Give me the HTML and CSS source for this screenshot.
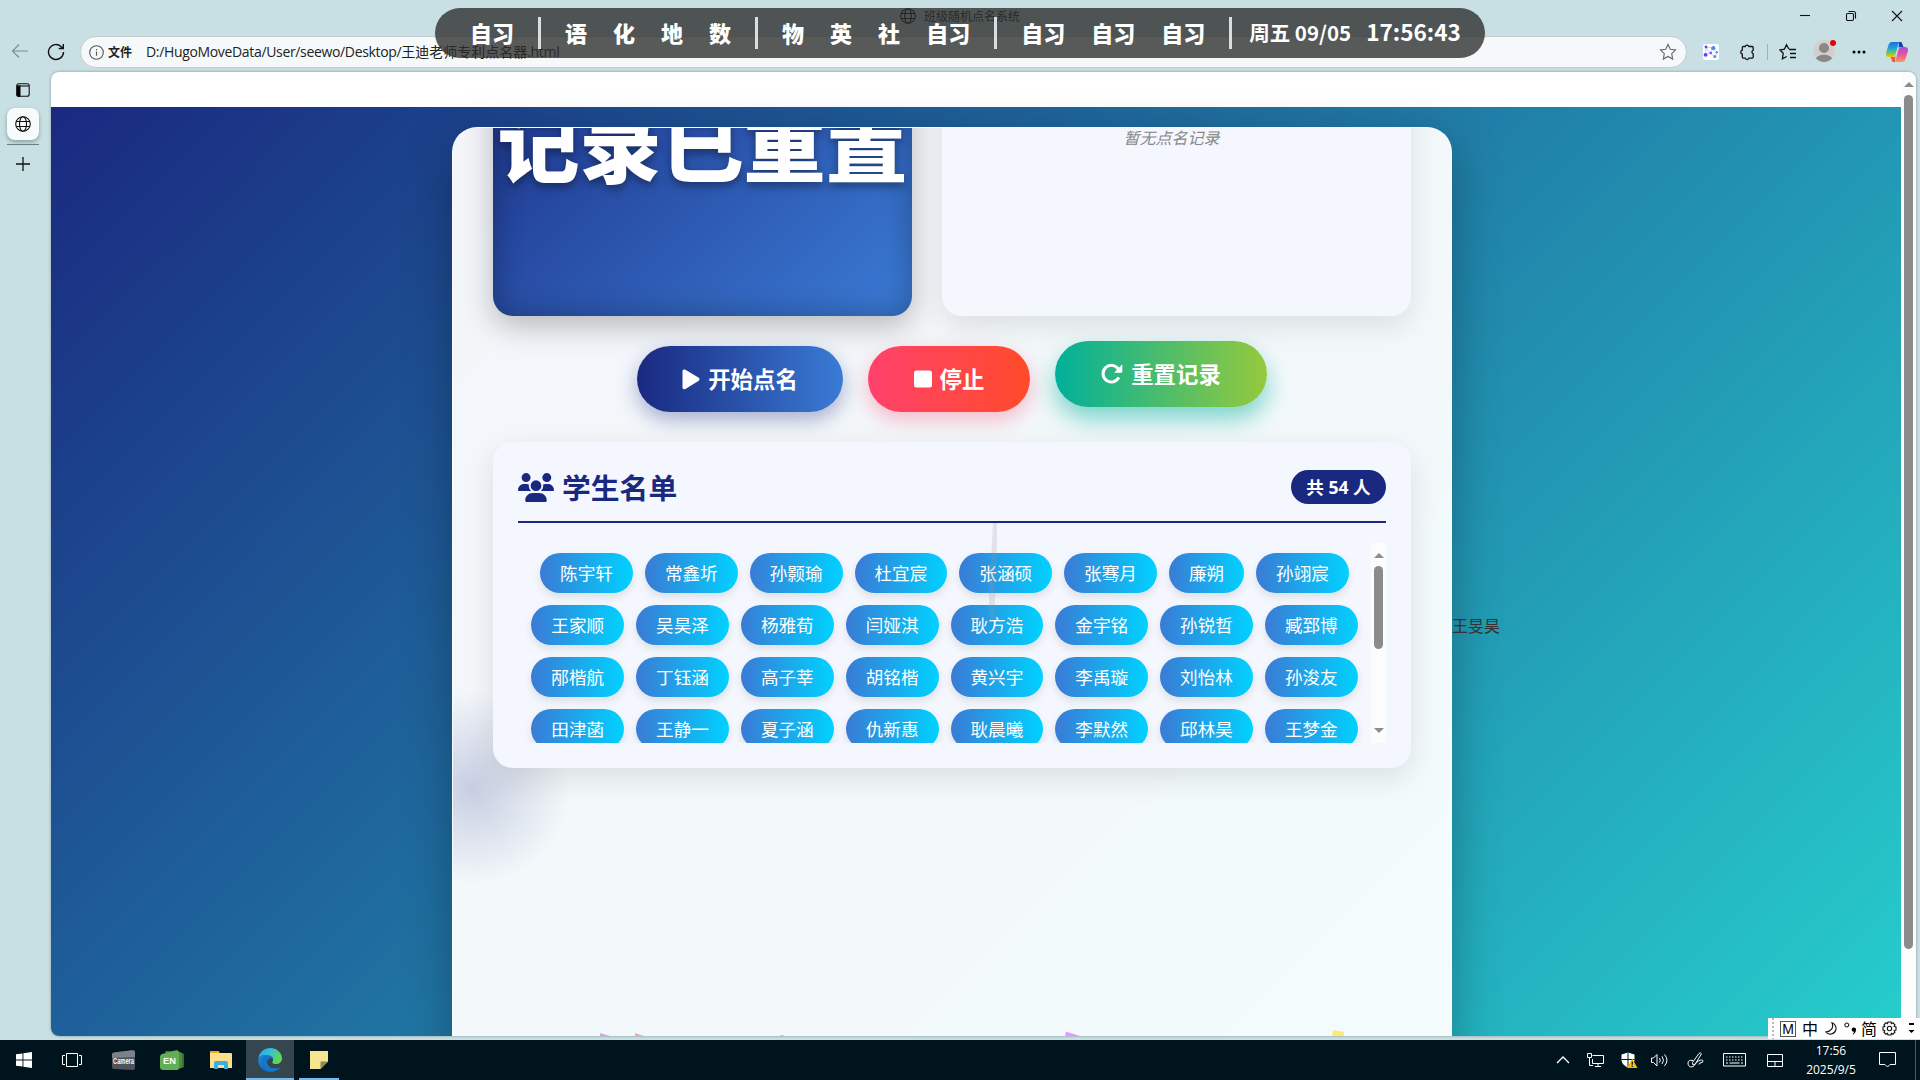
FILE: index.html
```html
<!DOCTYPE html>
<html lang="zh-CN">
<head>
<meta charset="utf-8">
<title>班级随机点名系统</title>
<link rel="stylesheet" href="styles.css">
</head>
<body>
<div class="desktop">
  <div class="browser">
    <header class="titlebar">
      <div class="tab-title">
        <svg width="16" height="16" viewBox="0 0 16 16" class="line"><circle cx="8" cy="8" r="7.3"/><ellipse cx="8" cy="8" rx="3.3" ry="7.3"/><path d="M1.3 5.5h13.4M1.3 10.5h13.4"/></svg>
        <span>班级随机点名系统</span>
      </div>
      <div class="window-controls">
        <svg width="12" height="12" viewBox="0 0 12 12" class="line"><path d="M1 5.5h10"/></svg>
        <svg width="12" height="12" viewBox="0 0 12 12" class="line"><rect x="1.5" y="3.5" width="7" height="7" rx="1.2"/><path d="M3.5 1.5h5a2 2 0 0 1 2 2v5"/></svg>
        <svg width="12" height="12" viewBox="0 0 12 12" class="line"><path d="M1 1l10 10M11 1L1 11"/></svg>
      </div>
    </header>
    <div class="toolbar">
      <svg class="line back" width="18" height="16" viewBox="0 0 18 16"><path d="M17 8H1.5M8 1.5L1.5 8L8 14.5"/></svg>
      <svg class="line reload" width="18" height="18" viewBox="0 0 18 18"><path d="M16.5 9A7.5 7.5 0 1 1 14 3.4L16 5.2M16.3 1v4.5h-4.6" stroke-width="1.4"/></svg>
      <div class="address">
        <svg class="line info" width="15" height="15" viewBox="0 0 15 15"><circle cx="7.5" cy="7.5" r="6.8"/><path d="M7.5 6.5v4.3M7.5 4v1.2"/></svg>
        <span class="scheme">文件</span>
        <span class="url"><span class="url-path">D:/HugoMoveData/User/seewo/Desktop/</span>王迪老师专利点名器<span class="url-path">.html</span></span>
        <svg class="line star" width="18" height="18" viewBox="0 0 18 18"><path d="M9 1.4l2.3 4.9 5.3.7-3.9 3.7 1 5.4L9 13.5l-4.7 2.6 1-5.4L1.4 7l5.3-.7z"/></svg>
      </div>
      <div class="tools">
        <svg width="16" height="16" viewBox="0 0 16 16"><rect width="16" height="16" rx="2" fill="#fff"/><path d="M3 3l7 1 4 4-2 5-5-4-4 2zM10 4L7 9M3 3l4 6" stroke="#b9c3ff" fill="none" stroke-width=".8"/><circle cx="3" cy="3" r="1.4" fill="#6a3df5"/><circle cx="10.3" cy="4.2" r="2.1" fill="#4b8bff"/><circle cx="2.6" cy="10.8" r="1.9" fill="#6a3df5"/><circle cx="7.8" cy="9" r="1.3" fill="#5265f7"/><circle cx="13.8" cy="8.3" r="1.2" fill="#3d9bff"/><circle cx="11.8" cy="12.6" r="1.5" fill="#4b8bff"/></svg>
        <svg class="line puzzle" width="16" height="18" viewBox="0 0 16 18"><path d="M4 3.5h2.2a2 2 0 0 1 3.8 0h3.2a1 1 0 0 1 1 1v2.8a1.9 1.9 0 0 0 0 3.6v3.2a1 1 0 0 1-1 1H10a2 2 0 0 1-3.8 0H4.300a1 1 0 0 1-1-1v-3a2 2 0 0 1 0-3.900V4.500a1 1 0 0 1 .7-1z" stroke-width="1.3"/></svg>
        <i class="divider"></i>
        <svg class="line favs" width="18" height="18" viewBox="0 0 18 18"><path d="M9.800 6L7.500 1.700 5.400 6.200 1 7l3.200 3.300-.8 5.500 4.300-2.300M10 6.500h7M11 10.500h6M11 14.500h6" stroke-width="1.3"/></svg>
        <svg class="avatar" width="26" height="26" viewBox="0 0 26 26"><circle cx="12" cy="14" r="11" fill="#d2d0ce"/><circle cx="12" cy="11" r="5" fill="#8a8886"/><path d="M4 21.500c2-5 14-5 16 0a11 11 0 0 1-16 0z" fill="#8a8886"/><circle cx="21" cy="6" r="3.600" fill="#c8e0e3"/><circle cx="21" cy="6" r="3" fill="#e60000"/></svg>
        <svg class="more" width="14" height="4" viewBox="0 0 14 4"><circle cx="2" cy="2" r="1.500"/><circle cx="7" cy="2" r="1.500"/><circle cx="12" cy="2" r="1.500"/></svg>
        <svg class="copilot" width="22" height="20" viewBox="0 0 22 20">
          <defs>
            <linearGradient id="cpa" x1="0" y1="0" x2="0" y2="1"><stop offset="0" stop-color="#1a6fe0"/><stop offset=".45" stop-color="#20a8d8"/><stop offset=".75" stop-color="#7fc843"/><stop offset="1" stop-color="#f3c21b"/></linearGradient>
            <linearGradient id="cpb" x1="0" y1="0" x2="0" y2="1"><stop offset="0" stop-color="#a44de8"/><stop offset=".5" stop-color="#e9549b"/><stop offset="1" stop-color="#ff9a55"/></linearGradient>
          </defs>
          <path d="M13 0h2.500l2 5h-3c-1 0-1.500.5-2 1.500z" fill="#1540b8"/><path d="M9 20H6.500l-2-5h3c1 0 1.500-.5 2-1.500z" fill="#ef5b2d"/>
          <path d="M6 0h8c-1.200.5-1.700 1.500-2 3l-2 8c-.7 2.800-1.800 4-4 4H3c-2.500 0-3.500-2-2.800-4.500l2.300-7.500C3.200 1 4.200 0 6 0z" fill="url(#cpa)"/>
          <path d="M16 20H8c1.200-.5 1.700-1.500 2-3l2-8c.7-2.800 1.800-4 4-4h3c2.500 0 3.500 2 2.800 4.500L19.500 17c-.7 2-1.700 3-3.500 3z" fill="url(#cpb)"/></svg>
      </div>
    </div>
    <div class="main">
      <nav class="side-tabs">
        <svg class="line panel-icon" width="14" height="14" viewBox="0 0 14 14"><rect x=".8" y=".8" width="12.400" height="12.400" rx="2"/><path d="M1 3h12" /><path d="M1 3h3v10.500H2.500L1 12.500z" fill="#000"/></svg>
        <div class="side-active"><svg width="16" height="16" viewBox="0 0 16 16" class="line"><circle cx="8" cy="8" r="7.300"/><ellipse cx="8" cy="8" rx="3.500" ry="7.300"/><path d="M1.300 5.500h13.400M1.300 10.500h13.400"/></svg></div>
        <i class="side-rule"></i>
        <svg class="line" width="16" height="16" viewBox="0 0 16 16"><path d="M8 1v14M1 8h14" stroke-width="1.300"/></svg>
      </nav>
      <div class="viewport">
        <div class="page">
          <div class="backdrop">
            <section class="card">
              <div class="orb"></div>
              <div class="top-row">
                <div class="display"><span>记录已重置</span></div>
                <div class="history"><span>暂无点名记录</span></div>
              </div>
              <div class="buttons">
                <button class="btn start"><svg width="18" height="21" viewBox="0 0 18 21"><path d="M.5 2.300C.5.500 2 0 3.400.7l13 7.900c1.400.9 1.400 2.600 0 3.500l-13 7.900C2 20.800.5 20 .5 18.500z"/></svg><span>开始点名</span></button>
                <button class="btn stop"><svg width="18" height="18" viewBox="0 0 18 18"><rect width="18" height="17" y=".5" rx="2.500"/></svg><span>停止</span></button>
                <button class="btn reset"><svg width="22" height="22" viewBox="0 0 22 22"><path d="M17.800 14.300A8.300 8.300 0 1 1 17 5.700L18.500 7.500" fill="none" stroke="#fff" stroke-width="3"/><path d="M21.300 1.300v7.400a1 1 0 0 1-1 1h-7.200z"/></svg><span>重置记录</span></button>
              </div>
              <div class="students">
                <div class="students-head">
                  <svg width="36" height="29" viewBox="0 0 640 512"><path d="M144 0a80 80 0 1 1 0 160A80 80 0 1 1 144 0zM512 0a80 80 0 1 1 0 160A80 80 0 1 1 512 0zM0 298.700C0 239.800 47.800 192 106.700 192h42.700c15.900 0 31 3.500 44.600 9.700c-1.300 7.200-1.900 14.700-1.900 22.300c0 38.200 16.800 72.500 43.300 96c-.2 0-.4 0-.7 0H21.300C9.600 320 0 310.400 0 298.700zM405.300 320c-.2 0-.4 0-.7 0c26.600-23.500 43.300-57.800 43.300-96c0-7.600-.7-15-1.900-22.300c13.600-6.300 28.700-9.700 44.600-9.700h42.700C592.200 192 640 239.800 640 298.700c0 11.800-9.600 21.300-21.300 21.300H405.300zM224 224a96 96 0 1 1 192 0 96 96 0 1 1-192 0zM128 485.300C128 411.700 187.700 352 261.300 352H378.700C452.300 352 512 411.700 512 485.300c0 14.700-11.900 26.700-26.700 26.700H154.700c-14.700 0-26.700-11.900-26.700-26.700z"/></svg>
                  <h2>学生名单</h2>
                  <span class="count">共 54 人</span>
                </div>
                <div class="list-wrap">
                  <div class="list">
                    <span>陈宇轩</span><span>常鑫圻</span><span>孙颢瑜</span><span>杜宜宸</span><span>张涵硕</span><span>张骞月</span><span>廉朔</span><span>孙翊宸</span>
                    <span>王家顺</span><span>吴昊泽</span><span>杨雅荀</span><span>闫娅淇</span><span>耿方浩</span><span>金宇铭</span><span>孙锐哲</span><span>臧郅博</span>
                    <span>邴楷航</span><span>丁钰涵</span><span>高子莘</span><span>胡铭楷</span><span>黄兴宇</span><span>李禹璇</span><span>刘怡林</span><span>孙浚友</span>
                    <span>田津菡</span><span>王静一</span><span>夏子涵</span><span>仇新惠</span><span>耿晨曦</span><span>李默然</span><span>邱林昊</span><span>王梦金</span>
                  </div>
                  <div class="scrollbar list-scroll"><i class="up"></i><i class="thumb"></i><i class="down"></i></div>
                </div>
              </div>
            </section>
            <span class="floating-name">王旻昊</span>
            <svg class="streak" width="12" height="98" viewBox="0 0 12 98"><path d="M6 0h4v18l-1 22-1 38v16l-2 4H3l-1-14V48l2-10z" fill="#9a9aa0" fill-opacity=".22"/></svg>
            <svg class="confetti" width="760" height="8" viewBox="0 0 760 8"><path d="M1 5l10 3H1z" fill="#e39bfa"/><path d="M36 5l9 3h-9z" fill="#fca5a5"/><path d="M181 7h4v1h-4z" fill="#f4bcbc"/><path d="M467 3.500l14 4.500h-15z" fill="#e39bfa"/><path d="M734 2l11 2-.5 4H733z" fill="#fbe97a"/></svg>
          </div>
        </div>
        <div class="scrollbar page-scroll"><i class="up"></i><i class="thumb"></i></div>
      </div>
    </div>
  </div>

  <footer class="taskbar">
    <div class="apps">
      <div class="app"><svg width="16" height="16" viewBox="0 0 16 16"><path d="M0 2.300L6.500 1.400v6.200H0zM7.400 1.200L16 0v7.600H7.400zM0 8.400h6.500v6.200L0 13.700zM7.400 8.400H16V16l-8.600-1.200z" fill="#fff"/></svg></div>
      <div class="app"><svg class="wline" width="20" height="14" viewBox="0 0 20 14"><path d="M4.500.5h11v13h-11zM3 2.500H.5v9H3M17 2.500h2.500v9H17"/></svg></div>
      <div class="app camera"><svg width="26" height="22" viewBox="0 0 26 22"><path d="M2 5.500Q2 4 4 3.600L22 1.300q3-.4 3 2V19q0 2-2 2L4 20q-2 0-2-2z" fill="#4d5358"/><path d="M2 9V5.500Q2 4 4 3.600L22 1.300q3-.4 3 2V8z" fill="#7a8187"/><text x="3" y="15" font-size="9" textLength="21" lengthAdjust="spacingAndGlyphs">Camera</text></svg></div>
      <div class="app en"><svg width="24" height="20" viewBox="0 0 24 20"><path d="M5 2l17 1q2 0 2 2v11q0 2-2 2H8z" fill="#35702f"/><path d="M5 1l14 1q3 0 3 2v13l-3 2z" fill="#4c8e43"/><path d="M0 6.500Q0 5 2 4L14 .7q5-1.200 5 2V18q0 2-2 2H3q-3 0-3-3z" fill="#63ad55"/><text x="3" y="14" font-size="9" textLength="13" lengthAdjust="spacingAndGlyphs">EN</text></svg></div>
      <div class="app"><svg width="22" height="18" viewBox="0 0 22 18"><path d="M0 1q0-1 1-1h7l2 2h11q1 0 1 1v14H0z" fill="#ffe08a"/><path d="M1 0h8v2H0V1z" fill="#f5a623"/><path d="M4 18v-6q0-2 2-2h10q2 0 2 2v6h-4v-4H8v4z" fill="#39aee6"/></svg></div>
      <div class="app active"><svg width="24" height="24" viewBox="0 0 24 24">
        <defs><linearGradient id="ea" x1="0" y1="0" x2="1" y2=".4"><stop offset="0" stop-color="#2f9fe8"/><stop offset=".5" stop-color="#34c1dc"/><stop offset="1" stop-color="#62d84e"/></linearGradient><linearGradient id="eb" x1="0" y1="0" x2="1" y2="1"><stop offset="0" stop-color="#1b8ee0"/><stop offset="1" stop-color="#0f4a9e"/></linearGradient></defs>
        <path d="M.3 10.500C1.500 3.800 6.500 0 12 0c7 0 12 5 12 10.500 0 3.500-2.800 5.500-5.800 5.500-2.500 0-4-.8-4-1.600 0-.6.9-1 .9-2.900C15 8.500 11.500 7 8 7 4 7 1.200 8.600.3 10.500z" fill="url(#ea)"/>
        <path d="M.3 10.500C1.200 8.600 4 7 8 7c3.500 0 7 1.500 7.100 4.500C14 9.500 9.500 10 9 14c-.3 4 4 7 8 6.500 2.300-.3 4-1.200 4.700-1.200.5 0 .4.500.1.900C19.600 22.700 16 24 12 24 5.300 24-.7 18.300.3 10.500z" fill="url(#eb)"/>
        <path d="M8 7.500C4.500 9 3.300 12 4 15.500c.8 4 4 7.500 8 8.300 4 .2 7.600-1.400 9.600-3.800.3-.4.200-.8-.2-.6-1.200.6-2.700 1-4.400 1-4.500 0-8-2.900-8-6.500 0-1.700 1-3.100 2.300-3.900z" fill="#1478c8"/></svg></div>
      <div class="app open"><svg width="18" height="18" viewBox="0 0 18 18"><path d="M0 0h18v10.500L10.500 18H0z" fill="#f3e68f"/><path d="M10.500 10.500H18L10.500 18z" fill="#8c8658"/></svg></div>
    </div>
    <div class="tray">
      <svg class="wline" width="14" height="8" viewBox="0 0 14 8"><path d="M1 7l6-6 6 6" stroke-width="1.300"/></svg>
      <svg class="wline" width="17" height="15" viewBox="0 0 17 15"><path d="M5.500 2.500h11v8h-11V6M8 13.500h6M11 10.500v3M.5.500h4v4h-4zM2.500 4.500v8H6"/></svg>
      <svg width="17" height="17" viewBox="0 0 17 17"><path d="M7 .5l6.500 2v5c0 4-3 6.500-6.500 8C3.500 14 .5 11.500.5 7.500v-5z" fill="#fff"/><path d="M7 .5v15M.5 7.500h13" stroke="#00141e"/><path d="M11.300 6.500l5.200 9.500H6z" fill="#fdb900"/><path d="M11.300 9.500v3.300M11.300 13.700v1.200" stroke="#222" stroke-width="1.300"/></svg>
      <svg class="wline volume" width="17" height="14" viewBox="0 0 17 14"><path d="M.5 5v4.500h2L6 13V1.500L2.500 5zM8.500 5q1.500 2.200 0 4.500M11 3.300q3 4 0 7.700M13.500 1.500q5 5.700 0 11.300"/></svg>
      <svg class="wline pen" width="17" height="16" viewBox="0 0 17 16"><path d="M6 13L5.500 10.500 12 1.500q1.500-1.500 2.500.3L8.300 12zM6 8.500Q1 7.500 1 11c0 5 5 5 7 1.500s7.500-6 8-3.500-4.500 1-4 3.500"/></svg>
      <svg class="wline keyboard" width="23" height="14" viewBox="0 0 23 14"><path d="M.5.500h22v12.500H.5z"/><path d="M3 4h17M3 7h17" stroke-dasharray="1.500 1.500"/><path d="M3 10h2M6.500 10h10M18 10h2"/></svg>
      <svg class="wline touchpad" width="16" height="13" viewBox="0 0 16 13"><path d="M.5.500h15v12H.5zM.5 7.500h15M8 7.500v5"/></svg>
      <div class="clock"><span>17:56</span><span>2025/9/5</span></div>
      <svg class="wline" width="17" height="16" viewBox="0 0 17 16"><path d="M.5.500h16v12h-5.500L8.500 15 6 12.500H.5z"/></svg>
      <i class="show-desktop"></i>
    </div>
  </footer>

  <div class="schedule">
    <div class="group"><b>自习</b></div><i></i>
    <div class="group"><b>语</b><b>化</b><b>地</b><b>数</b></div><i></i>
    <div class="group"><b>物</b><b>英</b><b>社</b><b>自习</b></div><i></i>
    <div class="group"><b>自习</b><b>自习</b><b>自习</b></div><i></i>
    <span class="date">周五 09/05</span><span class="time">17:56:43</span>
  </div>

  <div class="ime">
    <i class="grip"></i>
    <span class="mode">M</span>
    <span class="glyph zh">中</span>
    <svg class="line moon" width="12" height="13" viewBox="0 0 12 13"><path d="M7 .7C9 6 6 9.500.8 10c3 3.500 8.500 2.500 10-2C11.700 5 10 1.800 7 .7z"/></svg>
    <svg class="punct" width="13" height="13" viewBox="0 0 13 13"><circle cx="2.800" cy="3" r="2" fill="none" stroke="#000"/><path d="M9.500 5.500a2 2 0 0 1 2.500 2.200c0 2-1.200 3.800-3 4.800l-.4-.6c1-.7 1.400-1.500 1.400-2.200a2.100 2.100 0 0 1-.5-4.200z"/></svg>
    <span class="glyph jian">简</span>
    <svg class="line gear" width="15" height="15" viewBox="0 0 15 15"><path d="M6 1h3l.4 1.700 1.500-.9 2.100 2.100-.9 1.500L14 6v3l-1.900.5.900 1.600-2.100 2.100-1.500-.9L9 14H6l-.5-1.700-1.500.9-2.100-2.100.9-1.600L1 9V6l1.800-.6-.9-1.500L4 1.800l1.500.9z"/><circle cx="7.500" cy="7.500" r="2.200"/></svg>
    <svg class="ime-menu" width="7" height="11" viewBox="0 0 7 11"><path d="M1 0h5v2H1zM.5 7h6l-3 3z"/></svg>
  </div>
</div>
</body>
</html>
```
FILE: styles.css
```css
* { box-sizing: border-box; }
body { margin: 0; font-family: "Noto Sans", "Noto Sans CJK SC", sans-serif; }
svg { display: block; flex: none; }
i { display: block; flex: none; }
.line { fill: none; stroke: #111; stroke-width: 1.1; }
.wline { fill: none; stroke: #fff; stroke-width: 1; }

.desktop { position: relative; width: 1920px; height: 1080px; overflow: hidden; display: flex; flex-direction: column; }
.browser { height: 1040px; background: #c8e0e3; display: flex; flex-direction: column; }

/* browser chrome */
.titlebar { height: 36px; display: flex; justify-content: space-between; padding: 8px 17px 0 900px; }
.tab-title { display: flex; gap: 8px; font: 12px/16px "Noto Sans CJK SC", sans-serif; color: #222; }
.window-controls { display: flex; gap: 34px; padding-top: 2px; }
.toolbar { height: 36px; display: flex; align-items: flex-start; padding: 0 11px 0 11px; }
.back { margin-top: 7px; opacity: .4; }
.reload { margin: 7px 15px 0 18px; }
.address { width: 1607px; height: 32px; border: 1px solid #c6cccd; border-radius: 16px; background: #f5f9fa; display: flex; align-items: center; padding: 0 9px 0 8px; color: #222; }
.info { stroke: #555; }
.scheme { margin: 0 14px 0 4px; font: bold 12px/18px "Noto Sans CJK SC", sans-serif; }
.url { font: 14px/20px "Open Sans", "Noto Sans CJK SC", sans-serif; white-space: nowrap; }
.url-path { letter-spacing: -.34px; }
.star { margin-left: auto; stroke: #666; }
.tools { display: flex; align-items: center; height: 32px; margin-left: 16px; }
.puzzle { margin-left: 20px; }
.divider { width: 1px; height: 16px; background: #9fb2b4; margin-left: 12px; }
.favs { margin-left: 11px; }
.avatar { margin: -4px 0 0 15px; }
.more { margin-left: 14px; }
.copilot { margin-left: 20px; }

.main { display: flex; height: 964px; }
.side-tabs { width: 51px; display: flex; flex-direction: column; align-items: center; padding: 11px 5px 0 0; }
.side-active { width: 32px; height: 32px; margin-top: 11px; border-radius: 8px; background: #f7fbfc; display: grid; place-items: center; box-shadow: 0 2px 4px rgba(0,0,0,.3); }
.side-rule { width: 32px; height: 1px; margin: 4px 0 11px; background: #6e7d80; }

.viewport { width: 1865px; height: 964px; border-radius: 8px; overflow: hidden; background: #fff; display: flex; box-shadow: 0 0 3px rgba(0,0,0,.35); }
.page { width: 1850px; padding-top: 35px; }
.backdrop { position: relative; height: 980px; padding-top: 20px; background: linear-gradient(135deg, #1a2980, #26d0ce); }

/* roll-call card */
.card { position: relative; width: 1000px; height: 1000px; margin-left: 401px; padding: 0 40px; border: 1px solid rgba(255,255,255,.5); border-radius: 25px; background: rgba(255,255,255,.95); box-shadow: 0 15px 50px rgba(0,0,0,.3); overflow: hidden; }
.orb { position: absolute; left: -130px; top: 510px; width: 300px; height: 300px; background: radial-gradient(circle, rgba(26,41,128,.2) 0, transparent 97px); }
.top-row { position: relative; display: flex; gap: 30px; margin-top: -162px; }
.display { width: 419px; height: 350px; border-radius: 20px; background: linear-gradient(135deg, #1a2980, #3a7bd5); box-shadow: 0 10px 30px rgba(0,0,0,.25), inset 0 0 30px rgba(0,0,0,.3); display: flex; align-items: center; justify-content: center; }
.display span { font: 900 82px/116px "Noto Sans CJK SC", sans-serif; color: #fff; white-space: nowrap; text-shadow: 0 4px 10px rgba(0,0,0,.4); }
.history { flex: 1; height: 350px; border-radius: 20px; background: #f5f7ff; box-shadow: 0 10px 30px rgba(0,0,0,.1); display: flex; justify-content: center; padding: 159px 10px 0 0; }
.history span { font: italic 16px/24px "Noto Sans CJK SC", sans-serif; color: #888; }

.buttons { position: relative; display: flex; justify-content: center; gap: 25px; margin-top: 30px; }
.btn { height: 66px; border: 0; border-radius: 33px; color: #fff; display: flex; align-items: center; justify-content: center; gap: 8px; padding: 0; font: bold 22.4px/32px "Noto Sans CJK SC", sans-serif; }
.btn svg { fill: #fff; }
.btn span { margin-top: -2px; }
.start { width: 206px; background: linear-gradient(to right, #1a2980, #3a7bd5); box-shadow: 0 8px 20px rgba(26,41,128,.35); }
.stop { width: 162px; background: linear-gradient(to right, #ff416c, #ff4b2b); box-shadow: 0 8px 20px rgba(255,65,108,.35); }
.reset { width: 212px; background: linear-gradient(to right, #00b09b, #96c93d); box-shadow: 0 12px 25px rgba(0,176,155,.5); transform: translateY(-5px); }

.students { position: relative; height: 326px; margin-top: 30px; padding: 25px 25px 0; border-radius: 20px; background: #f5f7ff; box-shadow: 0 10px 30px rgba(0,0,0,.1); }
.students-head { height: 56px; display: flex; align-items: flex-start; border-bottom: 2px solid #1a2980; color: #1a2980; }
.students-head svg { fill: #1a2980; margin-top: 6px; }
.students-head h2 { margin: -1px auto 0 8px; font: bold 28.8px/42px "Noto Sans CJK SC", sans-serif; }
.count { width: 95px; height: 34px; margin-top: 3px; border-radius: 17px; background: #1a2980; color: #fff; text-align: center; font: bold 17.6px/34px "Open Sans", "Noto Sans CJK SC", sans-serif; }
.list-wrap { display: flex; height: 200px; margin-top: 20px; overflow: hidden; }
.list { width: 853px; padding: 10px; display: flex; flex-wrap: wrap; justify-content: center; align-content: flex-start; gap: 12px; }
.list span { height: 40px; padding: 0 20px; border-radius: 20px; color: #fff; background: linear-gradient(to right, #3a7bd5, #00d2ff); box-shadow: 0 4px 8px rgba(0,0,0,.1); font: 17.6px/40px "Noto Sans CJK SC", sans-serif; white-space: nowrap; }

.scrollbar { width: 15px; background: #fcfcfc; display: flex; flex-direction: column; align-items: center; }
.up, .down { border: 5px solid transparent; border-top: 0; border-bottom: 5px solid #8b8b8b; }
.down { border-top: 5px solid #8b8b8b; border-bottom: 0; }
.thumb { width: 9px; border-radius: 5px; background: #8b8b8b; }
.list-scroll { padding-top: 10px; }
.list-scroll .thumb { height: 83px; margin-top: 8px; }
.list-scroll .down { margin-top: 79px; }
.page-scroll { padding-top: 10px; }
.page-scroll .thumb { height: 854px; margin-top: 8px; }

/* overlays thrown off by the draw animation */
.floating-name { position: absolute; left: 1401px; top: 506px; font: 16px/24px "Noto Sans CJK SC", sans-serif; color: #333; }
.streak { position: absolute; left: 936px; top: 416px; }
.confetti { position: absolute; left: 548px; top: 921px; }

/* timetable strip */
.schedule { position: absolute; left: 435px; top: 8px; width: 1050px; height: 50px; border-radius: 25px; padding-left: 35px; display: flex; align-items: center; background: rgba(43,43,43,.78); color: #fff; font: bold 22px/48px "Noto Sans CJK SC", sans-serif; white-space: nowrap; }
.schedule .group, .schedule span { margin-top: -2px; }
.schedule .group { display: flex; gap: 26px; }
.schedule i { width: 3px; height: 32px; margin: 0 24px; background: #ddd; }
.schedule .date { margin-left: -7px; font-size: 20.500px; }
.schedule .time { margin-left: 15px; font-size: 22.6px; }

/* taskbar */
.taskbar { height: 40px; background: #00141e; display: flex; justify-content: space-between; }
.apps { display: flex; }
.app { width: 48px; display: grid; place-items: center; }
.app:nth-child(2) { margin-right: 3px; }
.app:nth-child(3), .app:nth-child(4) { margin-right: 1px; }
.app:nth-child(5) { margin-right: 1px; }
.app text { font-family: "Liberation Sans", sans-serif; font-weight: bold; fill: #fff; }
.app.active { background: #35464f; border-bottom: 2px solid #76b9ed; padding-top: 2px; margin-right: 5px; }
.app.open { width: 40px; border-bottom: 2px solid #76b9ed; padding-top: 2px; }
.tray { display: flex; align-items: center; gap: 17px; }
.tray .volume { margin-left: -4px; }
.tray .pen { margin-left: 2px; }
.tray .keyboard { margin-left: 2px; }
.tray .touchpad { margin-left: 4px; }
.clock { width: 64px; margin: 0 -1px; display: flex; flex-direction: column; align-items: center; color: #fff; font: 12px/19px "Open Sans", sans-serif; letter-spacing: -.05px; }
.show-desktop { width: 5px; height: 40px; border-left: 1px solid #4c5a62; margin-left: 2px; }

/* input method bar */
.ime { position: absolute; left: 1768px; top: 1018px; width: 152px; height: 21px; background: #fff; display: flex; align-items: center; padding-left: 4px; color: #000; }
.grip { width: 2px; height: 21px; background: repeating-linear-gradient(#bbb 0 2px, #fff 2px 4px); margin-right: 6px; }
.mode { width: 16px; height: 16px; border: 1px solid #555; font: 14px/14px "Liberation Sans", sans-serif; text-align: center; }
.glyph { font: 16px/21px "Noto Sans CJK SC", sans-serif; }
.zh { margin-left: 6px; }
.moon { margin-left: 7px; }
.punct { margin-left: 7px; }
.jian { margin-left: 4px; }
.gear { margin-left: 5px; }
.ime-menu { margin-left: 11px; }
```
